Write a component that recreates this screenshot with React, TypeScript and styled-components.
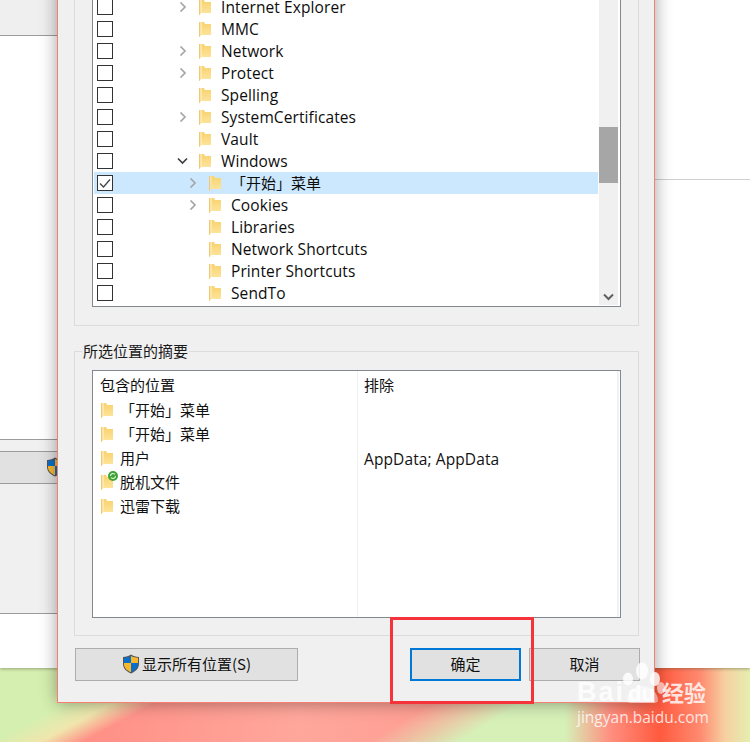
import styled, { createGlobalStyle } from "styled-components";

const CJK = `"Noto Sans CJK SC", "Noto Sans", sans-serif`;
const UI = `"Open Sans", "Noto Sans CJK SC", sans-serif`;

const GlobalStyle = createGlobalStyle`
  html, body { margin: 0; padding: 0; background: #fff; }
  body { font-family: ${UI}; color: #111; overflow: hidden; }
`;

const Screen = styled.div`
  position: relative;
  width: 750px;
  height: 742px;
  overflow: hidden;
  display: flex;
  flex-direction: column;
`;

const BackWindow = styled.div`
  height: 668px;
  flex: none;
  display: flex;
  background: #fff;
  box-shadow: 0 1px 3px rgba(90, 90, 60, 0.5);
  position: relative;
`;

const LeftStack = styled.div`
  width: 57px;
  flex: none;
  display: flex;
  flex-direction: column;
`;

const RightStack = styled.div`
  flex: 1;
  margin-left: 598px;
  padding-top: 179px;
`;

const RightRule = styled.div`
  height: 1px;
  background: #cfcfcf;
`;

const LeftBand = styled.div<{ $h: number; $bg: string }>`
  height: ${(p) => p.$h}px;
  flex: none;
  box-sizing: border-box;
  background: ${(p) => p.$bg};
  border-bottom: 1px solid #9c9c9c;
`;

const Desktop = styled.div`
  flex: 1;
  background:
    linear-gradient(90deg, rgba(255, 143, 128, 0) 565px, #ff8f80 610px, #ff5a3e 660px, #ff8a70 700px, #f6d0a0 725px, #e4efb0 750px),
    linear-gradient(148deg, rgba(214, 240, 184, 0) 258px, #d6f0b8 306px),
    linear-gradient(152deg, #d5efb0 0, #d5efb0 62px, #f0e6ad 84px, rgba(240, 230, 173, 0) 104px),
    linear-gradient(90deg, #ff9187 100px, #ffa79c 300px, #ff9c90 450px);
`;

const DialogWindow = styled.div`
  position: absolute;
  left: 57px;
  top: -60px;
  width: 598px;
  height: 763px;
  box-sizing: border-box;
  background: #f0f0f0;
  border: 1px solid #f47f72;
  border-top: none;
  box-shadow: 0 0 16px rgba(0, 0, 0, 0.38);
  padding-left: 16px;
  display: flex;
  flex-direction: column;
`;

const GroupBox = styled.div<{ $h: number; $mt: number }>`
  position: relative;
  flex: none;
  width: 565px;
  height: ${(p) => p.$h}px;
  margin-top: ${(p) => p.$mt}px;
  box-sizing: border-box;
  border: 1px solid #dcdcdc;
  padding: 18px 17px 0 17px;
`;

const GroupTitle = styled.div`
  position: absolute;
  left: 7px;
  top: -11px;
  padding: 0 1px;
  background: #f0f0f0;
  font-family: ${CJK};
  font-size: 15px;
  line-height: 20px;
  color: #1a1a1a;
`;

const ListFrame = styled.div<{ $h: number }>`
  position: relative;
  width: 529px;
  height: ${(p) => p.$h}px;
  box-sizing: border-box;
  border: 1px solid #828790;
  background: #fff;
  display: flex;
`;

const TreeBody = styled.div`
  flex: 1;
  padding: 1px 0 2px 1px;
  overflow: hidden;
  display: flex;
  flex-direction: column;
  justify-content: flex-end;
`;

const TreeRow = styled.div<{ $selected?: boolean }>`
  flex: none;
  height: 22px;
  display: flex;
  align-items: center;
  background: ${(p) => (p.$selected ? "#cce8ff" : "transparent")};
`;

const CheckBox = styled.span`
  flex: none;
  width: 16px;
  height: 16px;
  margin-left: 3px;
  border: 1px solid #333;
  background: #fff;
  box-sizing: border-box;
  display: flex;
  align-items: center;
  justify-content: center;
`;

const Chevron = styled.span<{ $indent: number }>`
  flex: none;
  width: 10px;
  height: 10px;
  margin-left: ${(p) => p.$indent}px;
  display: flex;
`;

const FolderSlot = styled.span`
  flex: none;
  margin-left: 11px;
  display: flex;
`;

const TreeLabel = styled.span<{ $cjk?: boolean }>`
  margin-left: 10px;
  font-family: ${(p) => (p.$cjk ? CJK : UI)};
  font-size: ${(p) => (p.$cjk ? 15 : 15.5)}px;
  line-height: 22px;
  letter-spacing: ${(p) => (p.$cjk ? 0 : 0.1)}px;
  white-space: nowrap;
  color: #0d0d0d;
`;

const ScrollBar = styled.div`
  flex: none;
  width: 19px;
  margin: 0 2px 1px 1px;
  background: #f0f0f0;
  position: relative;
  display: flex;
  flex-direction: column;
  align-items: center;
  justify-content: flex-end;
  padding-bottom: 4px;
  box-sizing: border-box;
`;

const ScrollThumb = styled.div`
  position: absolute;
  left: 0;
  bottom: 122px;
  width: 19px;
  height: 56px;
  background: #a6a6a6;
`;

const SummaryColumn = styled.div<{ $w?: number }>`
  ${(p) => (p.$w ? `width: ${p.$w}px; flex: none; border-right: 1px solid #eef0f2;` : "flex: 1; border-right: 2px solid #eef3f8; margin-right: 1px;")}
  box-sizing: border-box;
  padding-top: 2px;
`;

const ColumnHead = styled.div<{ $left: number }>`
  height: 25px;
  line-height: 24px;
  padding-left: ${(p) => p.$left}px;
  font-family: ${CJK};
  font-size: 15px;
  color: #111;
`;

const SummaryRow = styled.div`
  height: 24px;
  display: flex;
  align-items: center;
  padding-left: 8px;
  position: relative;
`;

const SummaryText = styled.span`
  margin-left: 7px;
  font-family: ${CJK};
  font-size: 15px;
  line-height: 24px;
  white-space: nowrap;
  color: #111;
`;

const ExcludeRow = styled.div`
  height: 24px;
  line-height: 26px;
  padding-left: 6px;
  font-size: 15.5px;
  letter-spacing: 0.1px;
  color: #111;
`;

const SyncBadge = styled.span`
  position: absolute;
  left: 15px;
  top: 1px;
  width: 10px;
  height: 10px;
  display: flex;
`;

const ButtonRow = styled.div`
  display: flex;
  margin-top: 12px;
  height: 33px;
`;

const DialogButton = styled.div<{ $w: number; $ml: number; $focus?: boolean }>`
  flex: none;
  width: ${(p) => p.$w}px;
  margin-left: ${(p) => p.$ml}px;
  height: 33px;
  box-sizing: border-box;
  padding-bottom: 2px;
  border: ${(p) => (p.$focus ? "2px solid #0078d7" : "1px solid #adadad")};
  background: #e1e1e1;
  display: flex;
  align-items: center;
  justify-content: center;
  font-family: ${CJK};
  font-size: 15px;
  color: #111;
`;

const ShieldSlot = styled.span`
  display: flex;
  margin-right: 2px;
`;

const LeftShield = styled.span`
  position: absolute;
  left: 46px;
  top: 457px;
  display: flex;
`;

const Annotation = styled.div`
  position: absolute;
  left: 390px;
  top: 617px;
  width: 144px;
  height: 87px;
  box-sizing: border-box;
  border: 3px solid #f5333a;
`;

const Watermark = styled.div`
  position: absolute;
  left: 575px;
  top: 662px;
  width: 175px;
  height: 80px;
  color: rgba(255, 255, 255, 0.82);
`;

const WatermarkBrand = styled.div`
  position: absolute;
  left: 2px;
  top: 15px;
  font-family: "Liberation Sans", sans-serif;
  font-weight: 700;
  font-size: 27px;
  line-height: 30px;
  letter-spacing: 2px;
`;

const WatermarkDu = styled.div`
  position: absolute;
  left: 53px;
  top: 19px;
  font-family: "Liberation Sans", sans-serif;
  font-weight: 700;
  font-size: 22px;
  line-height: 26px;
  color: rgba(255, 255, 255, 0.9);
`;

const WatermarkCn = styled.div`
  position: absolute;
  left: 87px;
  top: 14px;
  font-family: ${CJK};
  font-weight: 700;
  font-size: 22px;
  line-height: 30px;
`;

const WatermarkUrl = styled.div`
  position: absolute;
  left: 2px;
  top: 44px;
  font-family: "Open Sans", sans-serif;
  font-size: 15.5px;
  line-height: 22px;
`;

const WatermarkPaw = styled.svg`
  position: absolute;
  left: 48px;
  top: 0;
`;

function Folder() {
  return (
    <svg width="12" height="17" viewBox="0 0 12 17">
      <defs>
        <linearGradient id="folderFace" x1="0" y1="0" x2="0" y2="1">
          <stop offset="0" stopColor="#f8d26c" />
          <stop offset="1" stopColor="#fde39a" />
        </linearGradient>
      </defs>
      <path d="M2.500 1H5l1 2h6v11H2.500z" fill="url(#folderFace)" />
      <path d="M0 1h2.500v13L0 16z" fill="#fbe2a0" />
      <path d="M0 1h.8v14.500L0 16z" fill="#eec565" />
    </svg>
  );
}

function ChevronRight() {
  return (
    <svg width="10" height="10" viewBox="0 0 10 10">
      <path d="M2.500 0.500 7 5 2.500 9.500" fill="none" stroke="#a6a6a6" strokeWidth="1.700" />
    </svg>
  );
}

function ChevronDown() {
  return (
    <svg width="11" height="10" viewBox="0 0 11 10" style={{ marginLeft: -1 }}>
      <path d="M1 2.500 5.500 7 10 2.500" fill="none" stroke="#404040" strokeWidth="1.700" />
    </svg>
  );
}

function Shield() {
  return (
    <svg width="18" height="20" viewBox="0 0 18 20">
      <path d="M9 .5C7 2 4 3 1 3v7c0 4.500 3.500 7.500 8 9.500 4.500-2 8-5 8-9.500V3C14 3 11 2 9 .5z" fill="#555" />
      <path d="M9 2v7H2V3.800C4.500 3.700 7 3 9 2z" fill="#0b6fc9" />
      <path d="M9 2c2 1 4.500 1.700 7 1.800V9H9z" fill="#f8b82e" />
      <path d="M2 9h7v9.300C5 16.500 2 14 2 10.200z" fill="#f8b82e" />
      <path d="M9 9h7v1.200c0 3.800-3 6.300-7 8.100z" fill="#0b6fc9" />
    </svg>
  );
}

type TreeItem = {
  label: string;
  expand?: "right" | "down";
  indent: number;
  checked?: boolean;
  selected?: boolean;
  cjk?: boolean;
};

const level1 = 65;
const level2 = 75;

const treeItems: TreeItem[] = [
  { label: "Internet Explorer", expand: "right", indent: level1 },
  { label: "MMC", indent: level1 },
  { label: "Network", expand: "right", indent: level1 },
  { label: "Protect", expand: "right", indent: level1 },
  { label: "Spelling", indent: level1 },
  { label: "SystemCertificates", expand: "right", indent: level1 },
  { label: "Vault", indent: level1 },
  { label: "Windows", expand: "down", indent: level1 },
  { label: "「开始」菜单", expand: "right", indent: level2, checked: true, selected: true, cjk: true },
  { label: "Cookies", expand: "right", indent: level2 },
  { label: "Libraries", indent: level2 },
  { label: "Network Shortcuts", indent: level2 },
  { label: "Printer Shortcuts", indent: level2 },
  { label: "SendTo", indent: level2 },
];

const summaryItems = [
  { label: "「开始」菜单", exclude: "" },
  { label: "「开始」菜单", exclude: "" },
  { label: "用户", exclude: "AppData; AppData" },
  { label: "脱机文件", exclude: "", sync: true },
  { label: "迅雷下载", exclude: "" },
];

export default function App() {
  return (
    <>
      <GlobalStyle />
      <Screen>
        <BackWindow>
          <LeftStack>
            <LeftBand $h={36} $bg="#efefef" />
            <LeftBand $h={404} $bg="#fff" />
            <LeftBand $h={12} $bg="#f0f0f0" />
            <LeftBand $h={32} $bg="#e1e1e1" />
            <LeftBand $h={130} $bg="#f0f0f0" />
          </LeftStack>
          <RightStack>
            <RightRule />
          </RightStack>
        </BackWindow>
        <Desktop />
        <LeftShield>
          <Shield />
        </LeftShield>
        <DialogWindow>
          <GroupBox $h={386} $mt={0}>
            <ListFrame $h={348}>
              <TreeBody>
                {treeItems.map((item) => (
                  <TreeRow key={item.label} $selected={item.selected}>
                    <CheckBox>
                      {item.checked && (
                        <svg width="14" height="14" viewBox="0 0 14 14">
                          <path d="M2 7.500 5.500 11 12 3.500" fill="none" stroke="#444" strokeWidth="1.300" />
                        </svg>
                      )}
                    </CheckBox>
                    <Chevron $indent={item.indent}>
                      {item.expand === "right" && <ChevronRight />}
                      {item.expand === "down" && <ChevronDown />}
                    </Chevron>
                    <FolderSlot>
                      <Folder />
                    </FolderSlot>
                    <TreeLabel $cjk={item.cjk}>{item.label}</TreeLabel>
                  </TreeRow>
                ))}
              </TreeBody>
              <ScrollBar>
                <ScrollThumb />
                <svg width="11" height="8" viewBox="0 0 11 8">
                  <path d="M1 1.500 5.500 6 10 1.500" fill="none" stroke="#606060" strokeWidth="2" />
                </svg>
              </ScrollBar>
            </ListFrame>
          </GroupBox>
          <GroupBox $h={285} $mt={25}>
            <GroupTitle>所选位置的摘要</GroupTitle>
            <ListFrame $h={248}>
              <SummaryColumn $w={265}>
                <ColumnHead $left={7}>包含的位置</ColumnHead>
                {summaryItems.map((item, i) => (
                  <SummaryRow key={i}>
                    <Folder />
                    {item.sync && (
                      <SyncBadge>
                        <svg width="10" height="10" viewBox="0 0 10 10">
                          <circle cx="5" cy="5" r="5" fill="#3fa33a" />
                          <path d="M2.500 5a2.500 2.500 0 0 1 4.500-1.500M7.500 5a2.500 2.500 0 0 1-4.500 1.500" fill="none" stroke="#d9f2c8" strokeWidth="1.100" />
                        </svg>
                      </SyncBadge>
                    )}
                    <SummaryText>{item.label}</SummaryText>
                  </SummaryRow>
                ))}
              </SummaryColumn>
              <SummaryColumn>
                <ColumnHead $left={6}>排除</ColumnHead>
                {summaryItems.map((item, i) => (
                  <ExcludeRow key={i}>{item.exclude}</ExcludeRow>
                ))}
              </SummaryColumn>
            </ListFrame>
          </GroupBox>
          <ButtonRow>
            <DialogButton $w={223} $ml={1}>
              <ShieldSlot>
                <Shield />
              </ShieldSlot>
              显示所有位置(S)
            </DialogButton>
            <DialogButton $w={111} $ml={112} $focus>
              确定
            </DialogButton>
            <DialogButton $w={111} $ml={8}>
              取消
            </DialogButton>
          </ButtonRow>
        </DialogWindow>
        <Annotation />
        <Watermark>
          <WatermarkPaw width="50" height="45" viewBox="0 0 50 45">
            <ellipse cx="5" cy="17" rx="5" ry="6.500" fill="currentColor" />
            <ellipse cx="19" cy="9" rx="6" ry="8.500" fill="currentColor" />
            <ellipse cx="32" cy="17" rx="5" ry="7" fill="currentColor" />
            <ellipse cx="38" cy="26" rx="4" ry="6" fill="currentColor" opacity="0.7" />
            <path d="M4 38c0-8 8-14 15-14s16 6 16 14c0 4-5 3-15 3S4 42 4 38z" fill="currentColor" opacity="0.55" />
          </WatermarkPaw>
          <WatermarkBrand>Bai</WatermarkBrand>
          <WatermarkDu>du</WatermarkDu>
          <WatermarkCn>经验</WatermarkCn>
          <WatermarkUrl>jingyan.baidu.com</WatermarkUrl>
        </Watermark>
      </Screen>
    </>
  );
}
